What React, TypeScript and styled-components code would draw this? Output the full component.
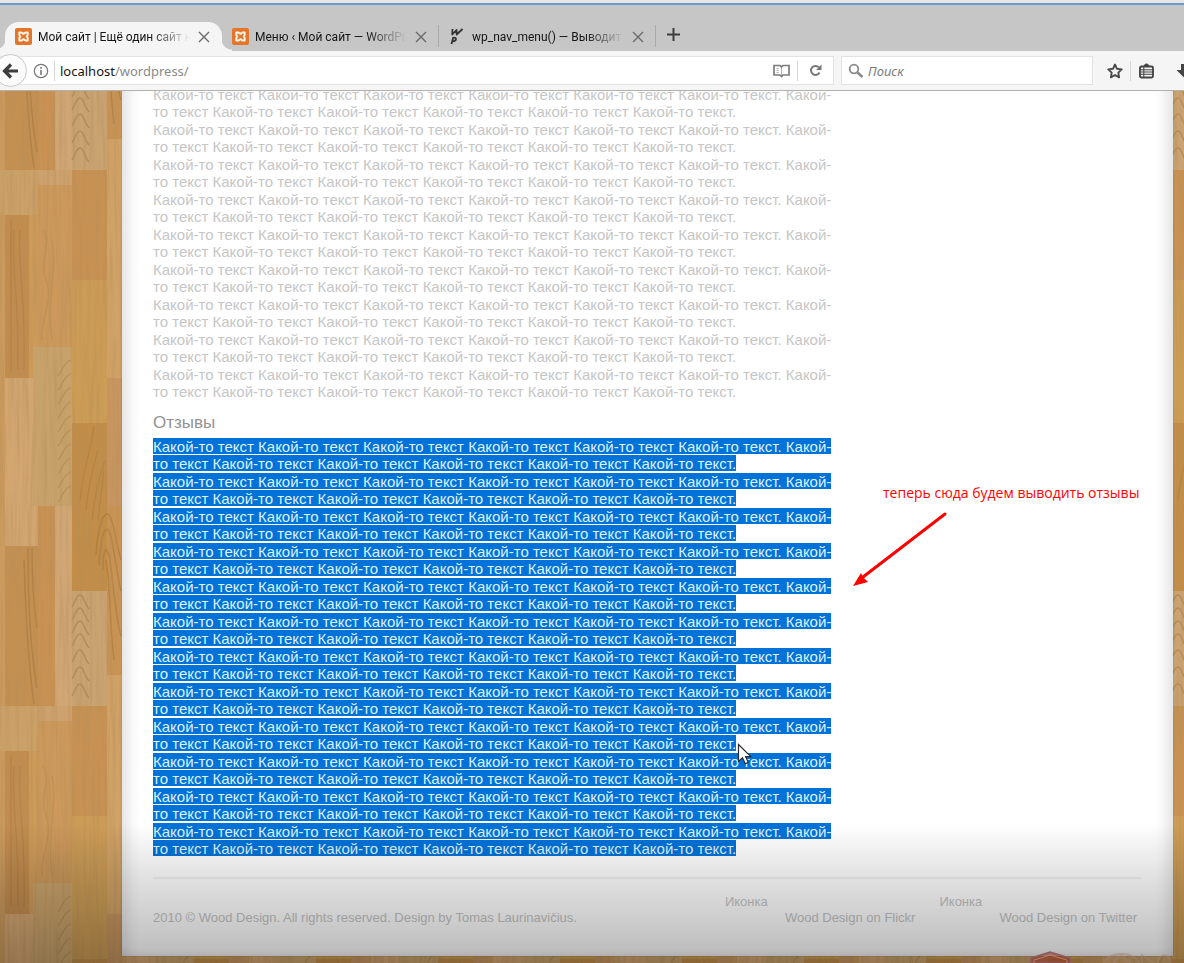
import React from "react";
import styled, { createGlobalStyle, css } from "styled-components";

const ui = `"Noto Sans", "Open Sans", sans-serif`;
const tabFont = `Roboto, "Noto Sans", sans-serif`;
const site = `"Liberation Sans", Arial, sans-serif`;

const GlobalStyle = createGlobalStyle`
  *, *::before, *::after { box-sizing: border-box; }
  html, body { margin: 0; padding: 0; }
  body { font-family: ${site}; background: #c6c6c7; }
  button { font: inherit; color: inherit; background: none; border: 0; padding: 0; }
`;

const Browser = styled.div`
  height: 100vh;
  display: flex;
  flex-direction: column;
  overflow: hidden;
`;

const Frame = styled.div`
  flex: none;
  height: 5px;
  background: #e9e5e1;
  border-bottom: 2px solid #689bcb;
`;

const TabStrip = styled.div`
  flex: none;
  height: 46px;
  padding: 17px 0 0 5px;
  display: flex;
  background: #c6c6c7;
`;

const Tab = styled.div<{ $active?: boolean; $divided?: boolean }>`
  position: relative;
  flex: none;
  width: 217px;
  height: 29px;
  padding: 0 10px;
  display: flex;
  align-items: center;
  font: 12px/16px ${tabFont};
  color: #141414;
  ${(p) =>
    p.$active &&
    css`
      background: #f5f5f5;
      border-radius: 14px 14px 0 0;
      &::before,
      &::after {
        content: "";
        position: absolute;
        bottom: 0;
        width: 10px;
        height: 12px;
      }
      &::before {
        left: -10px;
        background: radial-gradient(circle at 0 0, transparent 10px, #f5f5f5 11px);
      }
      &::after {
        right: -10px;
        background: radial-gradient(circle at 100% 0, transparent 10px, #f5f5f5 11px);
      }
    `}
  ${(p) =>
    p.$divided &&
    css`
      &::after {
        content: "";
        position: absolute;
        right: 0;
        top: 3px;
        width: 1px;
        height: 22px;
        background: #a9a9aa;
      }
    `}
`;

const TabTitle = styled.span`
  flex: 1;
  min-width: 0;
  margin: 0 6px;
  overflow: hidden;
  white-space: nowrap;
  mask-image: linear-gradient(to right, #000 calc(100% - 40px), transparent);
`;

const IconButton = styled.button<{ $w?: number }>`
  flex: none;
  width: ${(p) => p.$w ?? 16}px;
  height: 24px;
  display: flex;
  align-items: center;
  justify-content: center;
  svg { display: block; flex: none; }
`;

const Toolbar = styled.div`
  flex: none;
  height: 40px;
  padding: 5px 0;
  display: flex;
  background: #f5f5f5;
  border-bottom: 1px solid #b2b1ad;
  font: 13px/18px ${ui};
`;

const field = css`
  height: 29px;
  background: #fff;
  border: 1px solid #e3e3e3;
  display: flex;
  align-items: center;
`;

const AddressBar = styled.form`
  ${field}
  flex: 1;
  min-width: 0;
  padding-right: 6px;
  border-left: 0;
`;

const BackButton = styled.button`
  flex: none;
  width: 33px;
  height: 33px;
  margin-left: -6px;
  display: flex;
  align-items: center;
  justify-content: center;
  border: 1px solid #c9c9c9;
  border-radius: 50%;
  background: #fafafa;
`;

const Divider = styled.span<{ $gap?: number }>`
  flex: none;
  width: 1px;
  height: 20px;
  margin: 0 ${(p) => p.$gap ?? 5}px;
  background: #d6d6d6;
`;

const Address = styled.div`
  flex: 1;
  min-width: 0;
  margin-left: 5px;
  color: #8a8a8a;
  white-space: nowrap;
  b { font-weight: 400; color: #161616; }
`;

const SearchBar = styled.form`
  ${field}
  flex: none;
  width: 252px;
  margin: 0 14px 0 7px;
  padding-left: 6px;
`;

const SearchInput = styled.input`
  flex: 1;
  min-width: 0;
  margin-left: 4px;
  padding: 0;
  border: 0;
  outline: 0;
  background: none;
  font: 13px/18px ${ui};
  &::placeholder { color: #7b7b7b; font-style: italic; opacity: 1; }
`;

const Actions = styled.div`
  flex: none;
  width: 77px;
  height: 29px;
  display: flex;
  align-items: center;
  overflow: hidden;
`;

const Viewport = styled.div`
  position: relative;
  flex: 1;
  min-height: 0;
  overflow: hidden;
  background: #c7975a;
`;

const Backdrop = styled.svg`
  position: absolute;
  inset: 0;
  width: 100%;
  height: 100%;
`;

const Shade = styled.div`
  position: absolute;
  inset: auto 0 0;
  height: 140px;
  background: linear-gradient(to bottom, transparent, rgba(0, 0, 0, 0.12) 40%, rgba(0, 0, 0, 0.28));
  pointer-events: none;
`;

const Paper = styled.div`
  position: relative;
  display: flow-root;
  height: calc(100% - 7px);
  margin: 0 11px 0 122px;
  padding: 0 32px 0 31px;
  background: #fff;
  box-shadow: inset 16px 0 14px -10px rgba(0, 0, 0, 0.12), inset -16px 0 14px -10px rgba(0, 0, 0, 0.12),
    inset 0 -8px 10px -8px rgba(0, 0, 0, 0.12), 0 0 1px rgba(0, 0, 0, 0.3);
`;

const Article = styled.main`
  margin-top: -5px;
  width: 680px;
  max-width: 100%;
  color: #c6c6c6;
`;

const Para = styled.p`
  margin: 0 0 1px;
  font-size: 15px;
  line-height: 17px;
`;

const Heading = styled.h2`
  margin: 0;
  padding: 11px 0 5px;
  font-weight: 400;
  font-size: 17px;
  line-height: 21px;
  color: #929292;
`;

const Selected = styled.mark`
  color: #dff2ff;
  background: linear-gradient(#0072d8, #0072d8) no-repeat 0 0 / 100% 16px;
  box-decoration-break: clone;
  -webkit-box-decoration-break: clone;
`;

const Footer = styled.footer`
  display: flex;
  margin-top: 20px;
  padding: 15px 4px 0 0;
  border-top: 2px solid #f2f2f2;
  font-size: 13px;
  line-height: 16px;
  color: #c4c4c4;
`;

const Copyright = styled.p`
  flex: 1;
  margin: 16px 0 0;
`;

const FooterLink = styled.a`
  margin-left: 24px;
  display: flex;
  flex-direction: column;
  color: inherit;
  text-decoration: none;
  span + span { margin-left: 60px; }
`;

const Note = styled.div`
  position: absolute;
  top: 393px;
  left: 853px;
  width: 300px;
  color: #f00;
  font: 14px/18px "Open Sans", "Noto Sans", sans-serif;
  span { display: block; margin-left: 30px; white-space: nowrap; }
  svg { display: block; margin-top: 8px; }
`;

const Pointer = styled.svg`
  position: absolute;
  top: 652px;
  left: 737px;
`;

const Watermark = styled.svg`
  position: absolute;
  right: 12px;
  bottom: 0;
`;

const Xampp = () => (
  <svg width="17" height="17" viewBox="0 0 17 17">
    <rect width="17" height="17" rx="2" fill="#e3762b" />
    <path
      d="M4.300 4.500h2.200l2 1.400 2-1.400h2.200v2.600l-1 1.400 1 1.400v2.600h-2.200l-2-1.400-2 1.400H4.300V9.900l1-1.400-1-1.400z"
      fill="none"
      stroke="#fff6ea"
      strokeWidth="1.900"
      strokeLinejoin="round"
    />
  </svg>
);

const WpMark = () => (
  <svg width="17" height="17" viewBox="0 0 17 17" fill="none" stroke="#333" strokeWidth="1.800" strokeLinejoin="round">
    <path d="M3.500 1L3.300 6.500 7.500 2l.2 4.500L13.500 1" />
    <path d="M4.200 9.500L2.500 16M3.800 10c4-1.600 4.600 3-.4 3.300" />
  </svg>
);

const CloseX = () => (
  <svg width="12" height="12" viewBox="0 0 12 12" stroke="#6a6a6a" strokeWidth="1.400">
    <path d="M1 1l10 10M11 1L1 11" />
  </svg>
);

const planks: [number, number, number, number, string][] = [
  [0, 0, 38, 45, "#cba168"],
  [5, 45, 33, 163, "#c28c4f"],
  [29, 45, 9, 163, "#cd9a58"],
  [5, 208, 33, 168, "#d2a571"],
  [5, 376, 33, 160, "#c49052"],
  [38, 0, 34, 15, "#cea26f"],
  [38, 15, 34, 162, "#cc985b"],
  [33, 177, 39, 159, "#c8a26b"],
  [38, 336, 17, 200, "#c99153"],
  [55, 336, 17, 200, "#d0a675"],
  [72, 0, 35, 110, "#c79153"],
  [72, 110, 35, 67, "#cc9c56"],
  [72, 177, 35, 76, "#cb9c55"],
  [72, 253, 35, 168, "#c28d48"],
  [72, 421, 35, 115, "#c9a372"],
  [107, 0, 15, 208, "#d0a266"],
  [107, 208, 15, 128, "#c89560"],
  [107, 336, 15, 169, "#c99355"],
  [107, 505, 15, 31, "#d0a266"],
];

const chevrons = [425, 438, 451, 464, 480, 497, 514];
const arcs = [190, 204, 218, 232, 246, 260, 274, 288, 302, 316];

const Wood = () => (
  <Backdrop aria-hidden="true">
    <defs>
      <filter id="grain" x="0" y="0" width="100%" height="100%">
        <feTurbulence type="fractalNoise" baseFrequency="0.300 0.012" numOctaves="3" seed="7" />
        <feColorMatrix values="0 0 0 0 .45  0 0 0 0 .27  0 0 0 0 .1  1.800 0 0 0 -.75" />
      </filter>
      <pattern id="planks" x="0" y="79" width="122" height="536" patternUnits="userSpaceOnUse">
        <rect width="122" height="536" fill="#cb9a5e" />
        {planks.map(([x, y, w, h, fill]) => (
          <rect key={`${x}-${y}`} x={x} y={y} width={w} height={h} fill={fill} />
        ))}
        <g fill="none" stroke="#9c6c33" strokeOpacity=".45" strokeWidth="1.500">
          {chevrons.map((y) => (
            <path key={y} d={`M72 ${y + 12}c3-4 4-12 8-12s4 9 9 14`} />
          ))}
          {arcs.map((y) => (
            <path key={y} d={`M58 ${y + 16}c4-4 6-15 13-16`} strokeOpacity=".3" />
          ))}
          <path d="M96 385c2-30 8-45 13-40s6 25 12 45M99 395c2-30 6-40 10-34s6 35 12 60M103 400c0-20 3-26 6-14s6 60 12 80M106 390c4 20 4 70 8 100" />
          <path d="M28 378c0 50 2 100 9 140M32 378c0 30 2 60 5 80M24 390c2 60 4 100 10 144" />
          <path d="M14 60c-3 40 5 60 4 140M20 60c-3 40 6 60 4 140M11 50v150" strokeOpacity=".3" />
          <path d="M80 330c3-30 10-45 14-74M86 340c3-30 8-45 12-60M92 350c2-20 6-40 13-60M98 350l6-50" strokeOpacity=".3" />
          <path d="M42 60c12 10-4 30 4 50s-6 40-4 60M52 70c6 30-6 60 0 100" strokeOpacity=".2" />
        </g>
      </pattern>
    </defs>
    <rect width="100%" height="100%" fill="url(#planks)" />
    <rect width="100%" height="100%" filter="url(#grain)" opacity=".6" />
  </Backdrop>
);

const phrase = Array(6).fill("Какой-то текст").join(" ") + ".";
const paragraph = `${phrase} ${phrase}`;

export default function App() {
  return (
    <Browser>
      <GlobalStyle />
      <Frame />
      <TabStrip role="tablist">
        <Tab role="tab" $active aria-selected>
          <Xampp />
          <TabTitle>Мой сайт | Ещё один сайт на</TabTitle>
          <IconButton aria-label="Закрыть вкладку"><CloseX /></IconButton>
        </Tab>
        <Tab role="tab" $divided>
          <Xampp />
          <TabTitle>Меню ‹ Мой сайт — WordPress</TabTitle>
          <IconButton aria-label="Закрыть вкладку"><CloseX /></IconButton>
        </Tab>
        <Tab role="tab" $divided>
          <WpMark />
          <TabTitle>wp_nav_menu() — Выводит</TabTitle>
          <IconButton aria-label="Закрыть вкладку"><CloseX /></IconButton>
        </Tab>
        <IconButton $w={34} aria-label="Новая вкладка">
          <svg width="13" height="13" viewBox="0 0 13 13" stroke="#3d3d3d" strokeWidth="2">
            <path d="M6.500 0v13M0 6.500h13" />
          </svg>
        </IconButton>
      </TabStrip>

      <Toolbar>
        <AddressBar>
          <BackButton type="button" aria-label="Назад">
            <svg width="17" height="16" viewBox="0 0 17 16" fill="none" stroke="#3c3c3c" strokeWidth="3.200">
              <path d="M9 1.500L2.500 8 9 14.500M2.500 8H16" />
            </svg>
          </BackButton>
          <IconButton type="button" $w={27} aria-label="Сведения о сайте">
            <svg width="16" height="16" viewBox="0 0 16 16" fill="none" stroke="#777">
              <circle cx="8" cy="8" r="6.700" strokeWidth="1.200" />
              <path d="M8 7v5M8 4v1.800" strokeWidth="1.600" />
            </svg>
          </IconButton>
          <Divider $gap={0} />
          <Address>
            <b>localhost</b>/wordpress/
          </Address>
          <IconButton type="button" $w={22} aria-label="Режим чтения">
            <svg width="17" height="14" viewBox="0 0 17 14" fill="none" stroke="#7c7c7c" strokeWidth="1.700">
              <path d="M8.500 2.800L7 1.500H1v9.500h6l1.500 1.500L10 11h6V1.500h-6z" />
              <path d="M3.500 4.500h2M3.500 6.500h2M3.500 8.500h2M8.500 3v9" strokeWidth="1" strokeOpacity=".6" />
            </svg>
          </IconButton>
          <Divider />
          <IconButton type="button" $w={24} aria-label="Обновить">
            <svg width="13" height="13" viewBox="0 0 13 13" fill="none" stroke="#777" strokeWidth="2">
              <path d="M10.500 8.500A4.500 4.500 0 1 1 9.800 3.300" />
              <path d="M12.500 .5v5.500H7z" fill="#777" stroke="none" />
            </svg>
          </IconButton>
        </AddressBar>
        <SearchBar role="search">
          <svg width="16" height="16" viewBox="0 0 16 16" fill="none" stroke="#8a8a8a">
            <circle cx="6" cy="6" r="4.300" strokeWidth="1.800" />
            <path d="M9.500 9.500l5 4.500" strokeWidth="2.600" />
          </svg>
          <SearchInput aria-label="Поиск" placeholder="Поиск" />
        </SearchBar>
        <Actions>
          <IconButton aria-label="Добавить в закладки">
            <svg width="16" height="16" viewBox="0 0 16 16" fill="none" stroke="#4a4a4a" strokeWidth="1.900">
              <path d="M8 1.500l2 4.300 4.700.6-3.400 3.200.8 4.700L8 12l-4.100 2.300.8-4.700L1.300 6.400 6 5.800z" strokeLinejoin="round" />
            </svg>
          </IconButton>
          <Divider $gap={7} />
          <IconButton aria-label="Закладки">
            <svg width="15" height="16" viewBox="0 0 15 16" fill="none" stroke="#444">
              <path d="M4.500 3.500L6.500 1h2l2 2.500z" fill="#444" />
              <rect x="1" y="3.500" width="13" height="11" rx="1.500" strokeWidth="1.900" />
              <path d="M2 6.800h11M2 9h11M2 11.300h11M4.800 4v10" strokeWidth="1" />
            </svg>
          </IconButton>
          <IconButton $w={60} aria-label="Загрузки">
            <svg width="16" height="16" viewBox="0 0 16 16" fill="#444">
              <path d="M5 1h6v6h4.500L8 14.500.5 7H5z" />
            </svg>
          </IconButton>
        </Actions>
      </Toolbar>

      <Viewport>
        <Wood />
        <Paper>
          <Article>
            {Array.from({ length: 9 }, (_, i) => (
              <Para key={i}>{paragraph}</Para>
            ))}
            <Heading>Отзывы</Heading>
            {Array.from({ length: 12 }, (_, i) => (
              <Para key={i}>
                <Selected>{paragraph}</Selected>
              </Para>
            ))}
          </Article>
          <Footer>
            <Copyright>2010 © Wood Design. All rights reserved. Design by Tomas Laurinavičius.</Copyright>
            <FooterLink href="#flickr">
              <span>Иконка</span>
              <span>Wood Design on Flickr</span>
            </FooterLink>
            <FooterLink href="#twitter">
              <span>Иконка</span>
              <span>Wood Design on Twitter</span>
            </FooterLink>
          </Footer>
        </Paper>
        <Shade />
        <Watermark width="142" height="12" viewBox="0 0 142 12" fill="none" aria-hidden="true">
          <path d="M1 12V7L20 1l20 6v5z" fill="#8c2f24" fillOpacity=".55" stroke="#8b5a60" strokeWidth="1.500" />
          <path d="M4 12V9l16-5 17 5v3" stroke="#c98f7c" strokeOpacity=".7" />
          <path d="M73 12c8-12 30-12 36 0M83 12l8-8 9 8M112 12V4l12 8M128 12c0-10 12-10 13 0" stroke="#a08070" strokeOpacity=".5" strokeWidth="2" />
        </Watermark>
        <Note>
          <span>теперь сюда будем выводить отзывы</span>
          <svg width="96" height="76" viewBox="0 0 96 76" aria-hidden="true">
            <path d="M92 4L10 67" stroke="#f00" strokeWidth="3" strokeLinecap="round" />
            <path d="M0 76L8 63l2 4 5 5z" fill="#f00" />
          </svg>
        </Note>
        <Pointer width="17" height="24" viewBox="0 0 17 24" aria-hidden="true">
          <path d="M1.500 1.500v17l4-3.700 2.800 6 3-1.400-2.700-5.800h5.200z" fill="#fff" stroke="#2b2b33" strokeWidth="1.200" />
        </Pointer>
      </Viewport>
    </Browser>
  );
}
